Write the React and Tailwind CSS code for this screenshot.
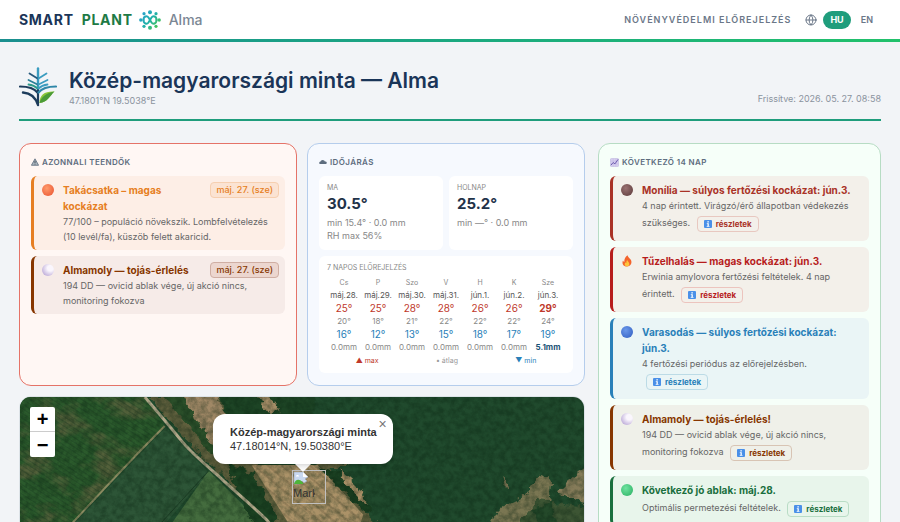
import { Globe } from 'lucide-react'

const urgent = [
  {
    title: 'Takácsatka – magas kockázat',
    text: '77/100 – populáció növekszik. Lombfelvételezés (10 levél/fa), küszöb felett akaricid.',
    date: 'máj. 27. (sze)',
    icon: 'orange',
    box: 'bg-[#fdeee6] border-[#e67e22]',
    color: 'text-[#e67e22]',
    badge: 'text-[#e67e22] bg-[#fbe3d3] border-[#f6cfb0]',
  },
  {
    title: 'Almamoly — tojás-érlelés',
    text: '194 DD — ovicid ablak vége, új akció nincs, monitoring fokozva',
    date: 'máj. 27. (sze)',
    icon: 'moon',
    box: 'bg-[#f6ebe8] border-[#873600]',
    color: 'text-[#873600]',
    badge: 'text-[#873600] bg-[#ecd6cf] border-[#cfaea3]',
  },
]

const upcoming = [
  {
    title: 'Monília — súlyos fertőzési kockázat: jún.3.',
    text: '4 nap érintett. Virágzó/érő állapotban védekezés szükséges.',
    icon: 'brown',
    box: 'bg-[#f3f0ea] border-[#a93226]',
    color: 'text-[#a93226]',
    link: 'text-[#a93226] border-[#e8c8c0]',
  },
  {
    title: 'Tűzelhalás — magas kockázat: jún.3.',
    text: 'Erwinia amylovora fertőzési feltételek. 4 nap érintett.',
    icon: 'fire',
    box: 'bg-[#f3f0ea] border-[#b71c1c]',
    color: 'text-[#b71c1c]',
    link: 'text-[#b71c1c] border-[#ecc4be]',
  },
  {
    title: 'Varasodás — súlyos fertőzési kockázat: jún.3.',
    text: '4 fertőzési periódus az előrejelzésben.',
    icon: 'blue',
    box: 'bg-[#eaf5f6] border-[#2980b9]',
    color: 'text-[#2980b9]',
    link: 'text-[#2980b9] border-[#bcdbe6]',
  },
  {
    title: 'Almamoly — tojás-érlelés!',
    text: '194 DD — ovicid ablak vége, új akció nincs, monitoring fokozva',
    icon: 'moon',
    box: 'bg-[#eff0e9] border-[#873600]',
    color: 'text-[#873600]',
    link: 'text-[#873600] border-[#d8c4b4]',
  },
  {
    title: 'Következő jó ablak: máj.28.',
    text: 'Optimális permetezési feltételek.',
    icon: 'green',
    box: 'bg-[#e8f5eb] border-[#196f3d]',
    color: 'text-[#196f3d]',
    link: 'text-[#196f3d] border-[#b9dcc5]',
  },
]

const forecast = [
  { day: 'Cs', date: 'máj.28.', max: 25, avg: 20, min: 16, rain: '0.0mm' },
  { day: 'P', date: 'máj.29.', max: 25, avg: 18, min: 12, rain: '0.0mm' },
  { day: 'Szo', date: 'máj.30.', max: 28, avg: 21, min: 13, rain: '0.0mm' },
  { day: 'V', date: 'máj.31.', max: 28, avg: 22, min: 15, rain: '0.0mm' },
  { day: 'H', date: 'jún.1.', max: 26, avg: 22, min: 18, rain: '0.0mm' },
  { day: 'K', date: 'jún.2.', max: 26, avg: 22, min: 17, rain: '0.0mm' },
  { day: 'Sze', date: 'jún.3.', max: 29, avg: 24, min: 19, rain: '5.1mm', hot: true },
]

const dots = {
  orange: 'bg-radial-[at_40%_35%] from-[#ff9a6b] to-[#e8502e]',
  moon: 'bg-radial-[at_70%_35%] from-[#faf6fd] from-25% to-[#a892cc]',
  brown: 'bg-radial-[at_40%_35%] from-[#9a7272] to-[#5a3838]',
  blue: 'bg-radial-[at_40%_35%] from-[#6a98ea] to-[#2f5cc0]',
  green: 'bg-radial-[at_40%_35%] from-[#6fe3a0] to-[#27ae60]',
}

function ItemIcon({ name }) {
  if (name === 'fire') {
    return (
      <svg viewBox="0 0 12 12" className="mt-0.5 size-3 shrink-0" aria-hidden="true">
        <path d="M6.5 0.3C7 2.4 8.4 3 9.6 4.6c2 2.8.4 7-3.6 7C2.200 11.600.6 8.200 2 5.400c.3.8.7 1.200 1.300 1.500C3.200 4.200 4.400 1.600 6.500.3z" fill="#f4642c" />
        <path d="M6.300 5c.2 1.500 2 2 2 3.900 0 1.500-1 2.400-2.300 2.400S3.600 10.400 3.700 9c.1-.8.4-1.200.8-1.700.2.500.5.700.9.8C5.200 6.800 5.600 5.700 6.300 5z" fill="#fdc43c" />
      </svg>
    )
  }
  return <span className={`mt-0.5 size-3 shrink-0 rounded-full ${dots[name]}`} />
}

function InfoIcon() {
  return (
    <svg viewBox="0 0 8 8" className="size-2" aria-hidden="true">
      <rect width="8" height="8" rx="1" fill="#4a90e8" />
      <rect x="3.400" y="1.200" width="1.400" height="1.300" fill="#fff" />
      <path d="M2.800 3.200h2v2.900h.7v.7H2.700v-.7h.8V3.900h-.7z" fill="#fff" />
    </svg>
  )
}

function WarningIcon() {
  return (
    <svg viewBox="0 0 8 8" className="size-2" aria-hidden="true">
      <path d="M4 .8L7.600 7.300H.4z" fill="#a9b4bd" stroke="#5d6d7e" strokeWidth="0.800" strokeLinejoin="round" />
      <path d="M4 2.800v2.200M4 5.700v.8" stroke="#3c4a58" strokeWidth="0.900" />
    </svg>
  )
}

function CloudIcon() {
  return (
    <svg viewBox="0 0 8 8" className="size-2" aria-hidden="true">
      <path d="M1.500 6C.6 6 .2 5.500.2 4.900s.5-1.100 1.200-1.100C1.600 2.600 2.600 1.900 3.700 1.900c1.200 0 2 .8 2.200 1.600 1.100 0 1.900.5 1.900 1.300S7.200 6 6.500 6z" fill="#5d6d7e" />
    </svg>
  )
}

function TrendIcon() {
  return (
    <svg viewBox="0 0 10 10" className="size-[9px]" aria-hidden="true">
      <rect x="0.500" y="0.500" width="9" height="9" rx="1" fill="#d6cff0" stroke="#b5aad8" strokeWidth="0.500" />
      <path d="M0.500 3.500h9M0.500 6.500h9M3.500 .5v9M6.500 .5v9" stroke="#bdb3e0" strokeWidth="0.500" />
      <path d="M1 8l2.500-3 2 1.500L9 1.500" fill="none" stroke="#6d5cae" strokeWidth="1.100" />
    </svg>
  )
}

// two loops crossing in the middle, ringed by dots
function SmartLogo() {
  return (
    <svg viewBox="0 0 22 20" className="h-5 w-[22px]" aria-hidden="true">
      <defs>
        <linearGradient id="knot" gradientUnits="userSpaceOnUse" x1="2" y1="2" x2="20" y2="18">
          <stop offset="0" stopColor="#2a9fd0" />
          <stop offset="0.5" stopColor="#1fb0a8" />
          <stop offset="1" stopColor="#4fc84a" />
        </linearGradient>
      </defs>
      <g fill="none" stroke="url(#knot)" strokeWidth="2" strokeLinecap="round">
        <path d="M4.500 10C4.500 6 8 5.500 9.500 7.500l3 5C14 14.500 17.500 14 17.500 10" />
        <path d="M4.500 10c0 4 3.500 4.500 5 2.500l3-5c1.500-2 5-1.500 5 2.500" />
      </g>
      <g fill="url(#knot)">
        <circle cx="11" cy="2.200" r="2" />
        <circle cx="11" cy="17.800" r="2" />
        <circle cx="5" cy="3.700" r="1.600" />
        <circle cx="17" cy="3.700" r="1.600" />
        <circle cx="5" cy="16.300" r="1.600" />
        <circle cx="17" cy="16.300" r="1.600" />
        <circle cx="1.800" cy="10" r="1.700" />
        <circle cx="20.200" cy="10" r="1.700" />
      </g>
    </svg>
  )
}

function PlantLogo() {
  return (
    <svg viewBox="0 0 38 40" className="h-10 w-[38px]" aria-hidden="true">
      <g fill="none" strokeLinecap="round" strokeWidth="1.800">
        <path d="M19 1.500V22" stroke="#3a9cc0" strokeWidth="2.400" />
        <path d="M19 22v15" stroke="#1d3c5c" strokeWidth="2.200" />
        <path d="M10.500 6.500l8 5" stroke="#27597c" />
        <path d="M27.500 6.500l-8 5" stroke="#3a9cc0" />
        <path d="M9.500 13l9 4.500" stroke="#2a7f97" />
        <path d="M28.500 13l-9 4.500" stroke="#3a9cc0" />
        <path d="M9.500 17.500c4 .5 7 2 9 4" stroke="#2d9a8a" />
        <path d="M28.500 17.500c-4 .5-7 2-9 4" stroke="#3a9cc0" />
        <path d="M1 19.500c7 0 14 1.500 17.500 6" stroke="#1d3c5c" strokeWidth="2.200" />
        <path d="M37 19.500c-7 0-14 1.500-17.500 6" stroke="#2f87a8" strokeWidth="2.200" />
        <path d="M4 25.500c7 .5 12.500 4.500 15 12.500" stroke="#1d3c5c" strokeWidth="2.400" />
      </g>
      <path d="M35.500 24.500C26 24 20.500 27.500 20.500 36c8-.5 10.500-7.500 15-11.500z" fill="#8cc63a" />
      <path d="M35.500 24.500C26 26.500 22 30.500 20.500 36c8-.5 10.500-7.500 15-11.500z" fill="#4a9a38" />
    </svg>
  )
}

function SatelliteImage() {
  return (
    <svg viewBox="0 0 565 300" preserveAspectRatio="xMinYMin slice" className="block size-full" aria-hidden="true">
      <defs>
        <filter id="canopy" x="0" y="0" width="100%" height="100%" colorInterpolationFilters="sRGB">
          <feTurbulence type="fractalNoise" baseFrequency="0.16" numOctaves="4" seed="7" />
          <feColorMatrix values="0 0 0 0 0.04  0 0 0 0 0.14  0 0 0 0 0.07  2.4 0 0 0 -0.8" />
        </filter>
        <filter id="soil" x="0" y="0" width="100%" height="100%" colorInterpolationFilters="sRGB">
          <feTurbulence type="fractalNoise" baseFrequency="0.03 0.045" numOctaves="4" seed="12" />
          <feColorMatrix values="0 0 0 0 0.46  0 0 0 0 0.4  0 0 0 0 0.28  0 4 0 0 -1.9" />
        </filter>
        <filter id="ragged" x="-5%" y="-5%" width="110%" height="110%" colorInterpolationFilters="sRGB">
          <feTurbulence type="fractalNoise" baseFrequency="0.12" numOctaves="3" seed="3" />
          <feDisplacementMap in="SourceGraphic" scale="10" xChannelSelector="R" yChannelSelector="G" />
        </filter>
        <pattern id="rows" width="4" height="4" patternUnits="userSpaceOnUse" patternTransform="rotate(33)">
          <rect width="4" height="1" fill="#163a20" opacity="0.3" />
        </pattern>
        <pattern id="furrows" width="9" height="9" patternUnits="userSpaceOnUse" patternTransform="rotate(40)">
          <rect width="9" height="2" fill="#6a5a3c" opacity="0.3" />
        </pattern>
        <clipPath id="vineyard">
          <path d="M0 0h125l20 28L50 129 0 190z" />
        </clipPath>
      </defs>
      <rect width="565" height="300" fill="#204a2d" />
      <g clipPath="url(#vineyard)">
        <rect width="160" height="190" fill="#2b5a2c" />
        <rect width="160" height="190" filter="url(#soil)" opacity="0.55" />
        <rect width="160" height="190" fill="url(#rows)" />
      </g>
      <g filter="url(#ragged)">
        <path d="M128 0h70l34 30 110 45 20 40-30 185h-50L250 125l-60-58z" fill="#5f5f3d" />
        <path d="M154 -4h44l8 26 30 34-28 8-34-36z" fill="#a08866" />
        <path d="M200 -6h95v80h-55l-34-55z" fill="#1d4425" />
        <path d="M142 -4l18 0 26 40 16 26-14-8-24-30z" fill="#2a4e29" />
        <path d="M234 -4l14 0 12 18-8 4z" fill="#a58c66" />
      </g>
      <path d="M146 30l43 46L40 250l-60-45z" fill="#2d5537" />
      <path d="M189 74l75 74 40 152H30z" fill="#446c3e" />
      <path d="M189 74L10 270" stroke="#1d3f26" strokeWidth="1" />
      <path d="M232 68h66l46 50-26 70-30-10-18-50z" fill="#ab9268" />
      <path d="M232 68h66l46 50-26 70-30-10-18-50z" fill="url(#furrows)" />
      <g filter="url(#ragged)">
        <path d="M207 64l26 12 18 30 22 80-26-40-26-42z" fill="#1c4222" />
        <path d="M312 70h42l30 30-25 26-18-14z" fill="#204a2d" />
        <path d="M320 72l16 14 16 28-12-4-16-24z" fill="#a88f66" />
        <path d="M300 70l16 4 24 28 14 10-8 4-26-24z" fill="#1a3f21" />
        <path d="M462 145l18-34 26-12 14-20 12 4-2 28-22 60z" fill="#7a7652" />
        <path d="M568 68l-20 16-8 14 28 10z" fill="#857b59" />
        <path d="M500 128l18-24 50 6v60h-60z" fill="#3d5534" />
        <path d="M512 112l20-6 6 20-14 8z" fill="#24492a" />
        <path d="M484 76l6 14-3 3z" fill="#7d7453" />
      </g>
      <path d="M145 29C118 56 84 92 50 129L-5 190" fill="none" stroke="#8a8a60" strokeWidth="2" />
      <path d="M125 0c12 14 24 28 36 43s28 27 42 40 30 26 44 40l50 60" fill="none" stroke="#b0a789" strokeWidth="3" />
      <rect width="565" height="300" filter="url(#canopy)" opacity="0.35" />
    </svg>
  )
}

function BrokenImage() {
  return (
    <svg viewBox="0 0 16 16" className="size-4" aria-hidden="true">
      <path d="M1 1h9l5 5-3 2 2 2-3 2-2-2-3 3H1z" fill="#c8d8f0" stroke="#a0a8b4" strokeWidth="0.600" />
      <path d="M10 1v5h5z" fill="#fff" />
      <path d="M1 13c1-5 6-6 9-1v1z" fill="#4eb43a" />
      <path d="M3 5.500c0-2 3-2 3 0z" fill="#fff" />
    </svg>
  )
}

function CardTitle({ icon, children }) {
  return (
    <h2 className="mb-2 flex items-center gap-[3px] text-[8px] leading-3 font-semibold tracking-wider text-[#5d6d7e] uppercase">
      {icon}
      {children}
    </h2>
  )
}

function Item({ item }) {
  return (
    <article className={`flex gap-2 rounded-md border-l-3 pt-1.5 pr-1.5 pb-1.5 pl-2 ${item.box}`}>
      <ItemIcon name={item.icon} />
      <div className="min-w-0 flex-1 pl-px">
        <div className="flex items-start justify-between gap-2">
          <h3 className={`text-[10px] leading-4 font-bold ${item.color}`}>{item.title}</h3>
          {item.date && (
            <span className={`shrink-0 rounded-sm border px-[5px] text-[9px] leading-3.5 font-medium ${item.badge}`}>
              {item.date}
            </span>
          )}
        </div>
        <p className="text-[9px] leading-[15px] text-[#666]">
          {item.text}{' '}
          {item.link && (
            <a
              href="#"
              className={`my-[3px] ml-1 inline-flex items-center gap-1 rounded-sm border px-1.5 align-middle text-[8px] leading-3.5 font-bold ${item.link}`}
            >
              <InfoIcon />
              részletek
            </a>
          )}
        </p>
      </div>
    </article>
  )
}

function DayCard({ label, temp, children }) {
  return (
    <div className="rounded-md bg-white px-2 pt-1.5 pb-2">
      <div className="text-[7px] leading-3 text-[#888] uppercase">{label}</div>
      <div className="mb-0.5 text-[15px] leading-5 font-bold text-[#1f3349]">{temp}</div>
      <div className="text-[9px] leading-[13px] text-[#888]">{children}</div>
    </div>
  )
}

function Forecast() {
  return (
    <div className="mt-1.5 rounded-md bg-white px-2 py-1.5">
      <table className="w-full table-fixed text-center text-[8px] leading-[13px] text-[#888]">
        <caption className="pb-0.5 text-left text-[7px] leading-3 uppercase">7 napos előrejelzés</caption>
        <thead>
          <tr className="text-[7px]">
            {forecast.map((d) => <th key={d.date} className="font-normal">{d.day}</th>)}
          </tr>
        </thead>
        <tbody>
          <tr className="text-[#555]">
            {forecast.map((d) => <td key={d.date}>{d.date}</td>)}
          </tr>
          <tr className="text-[10px] text-[#c0392b]">
            {forecast.map((d) => <td key={d.date} className={d.hot ? 'font-bold' : ''}>{d.max}°</td>)}
          </tr>
          <tr>
            {forecast.map((d) => <td key={d.date}>{d.avg}°</td>)}
          </tr>
          <tr className="text-[10px] text-[#2980b9]">
            {forecast.map((d) => <td key={d.date}>{d.min}°</td>)}
          </tr>
          <tr>
            {forecast.map((d) => (
              <td key={d.date} className={d.hot ? 'font-bold text-[#1a5276]' : ''}>{d.rain}</td>
            ))}
          </tr>
        </tbody>
      </table>
      <div className="flex justify-around text-[7px] leading-[13px]">
        <span className="text-[#c0392b]">▲ max</span>
        <span className="text-[#999]">• átlag</span>
        <span className="text-[#2980b9]">▼ min</span>
      </div>
    </div>
  )
}

function FieldMap() {
  return (
    <section className="relative h-[300px] overflow-hidden rounded-xl border border-[#dde3e8]" aria-label="Térkép">
      <SatelliteImage />
      <div className="absolute top-2.5 left-2.5 flex w-[25px] flex-col divide-y divide-[#ccc] overflow-hidden rounded-xs bg-white font-['Liberation_Sans',sans-serif] text-xl font-bold text-black">
        <button type="button" className="h-[25px] leading-6">+</button>
        <button type="button" className="h-[25px] leading-6">−</button>
      </div>
      <div className="absolute top-[73px] left-[272px] flex size-[34px] flex-col border border-[#c0c0c0]">
        <BrokenImage />
        <span className="w-[22px] overflow-hidden font-['Liberation_Sans',sans-serif] text-[11px] leading-3 text-[#333]">Mark</span>
      </div>
      <div className="absolute top-[17px] left-[193px] flex flex-col items-center font-['Liberation_Sans',sans-serif] text-[#333]">
        <div className="relative rounded-xl bg-white py-[11px] pr-4 pl-[17px] text-[11px] leading-[14px] shadow-md">
          <strong>Közép-magyarországi minta</strong>
          <div>47.18014°N, 19.50380°E</div>
          <button type="button" aria-label="Bezárás" className="absolute top-1 right-1 size-3 text-sm leading-3 text-[#757575]">×</button>
        </div>
        <div className="size-0 border-x-8 border-t-8 border-x-transparent border-t-white" />
      </div>
    </section>
  )
}

export default function App() {
  return (
    <div className="min-h-screen bg-[#f2f4f7] font-[Inter,sans-serif] text-[#1a3558]">
      <header className="bg-white">
        <div className="flex h-[39px] items-center justify-between px-[19px]">
          <div className="flex items-center gap-1.5">
            <span className="text-sm font-bold tracking-wider">
              SMART <span className="ml-1 text-[#1e7a45]">PLANT</span>
            </span>
            <SmartLogo />
            <span className="ml-0.5 text-sm font-medium text-[#7b8794]">Alma</span>
          </div>
          <div className="flex items-center gap-3.5 text-[#6b7788]">
            <span className="text-[9px] font-semibold tracking-[1px]">NÖVÉNYVÉDELMI ELŐREJELZÉS</span>
            <div className="flex items-center">
              <Globe size={12} strokeWidth={2} />
              <button type="button" className="mr-0.5 ml-1.5 rounded-full bg-[#1f9d7c] px-[7px] text-[9px] leading-[18px] font-bold text-white">HU</button>
              <button type="button" className="px-2 text-[9px] leading-[18px] font-semibold">EN</button>
            </div>
          </div>
        </div>
        <div className="h-[3px] bg-linear-to-r from-[#1a8f8f] to-[#22c16b]" />
      </header>

      <main className="px-[19px] pb-6">
        <div className="flex items-end justify-between border-b-2 border-[#1f9d7c] pt-[25px] pb-3">
          <div className="flex items-center gap-3">
            <PlantLogo />
            <div>
              <h1 className="text-[21px] leading-7 font-semibold">Közép-magyarországi minta — Alma</h1>
              <div className="text-[9px] leading-3 text-[#8a939e]">47.1801°N 19.5038°E</div>
            </div>
          </div>
          <div className="text-[9px] leading-4 text-[#8a939e]">Frissítve: 2026. 05. 27. 08:58</div>
        </div>

        <div className="mt-[22px] grid grid-cols-[2fr_1fr] items-start gap-[13px]">
          <div className="grid grid-cols-2 gap-2.5">
            <section className="rounded-xl border border-[#e57368] bg-[#fff7f4] px-[11px] py-3">
              <CardTitle icon={<WarningIcon />}>Azonnali teendők</CardTitle>
              <div className="flex flex-col gap-1.5">
                {urgent.map((item) => <Item key={item.title} item={item} />)}
              </div>
            </section>
            <section className="rounded-xl border border-[#b5cdec] bg-[#f6f9fe] px-[11px] py-3">
              <CardTitle icon={<CloudIcon />}>Időjárás</CardTitle>
              <div className="grid grid-cols-2 gap-1.5">
                <DayCard label="Ma" temp="30.5°">min 15.4° · 0.0 mm<br />RH max 56%</DayCard>
                <DayCard label="Holnap" temp="25.2°">min —° · 0.0 mm</DayCard>
              </div>
              <Forecast />
            </section>
            <div className="col-span-2">
              <FieldMap />
            </div>
          </div>
          <section className="rounded-xl border border-[#b7dcc4] bg-[#f6fff9] px-[11px] py-3">
            <CardTitle icon={<TrendIcon />}>Következő 14 nap</CardTitle>
            <div className="flex flex-col gap-1.5">
              {upcoming.map((item) => <Item key={item.title} item={item} />)}
            </div>
          </section>
        </div>
      </main>
    </div>
  )
}
